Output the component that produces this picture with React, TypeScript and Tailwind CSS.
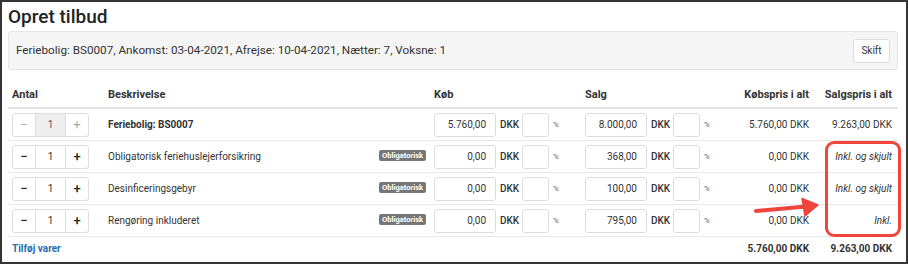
const cols = "grid grid-cols-[96px_326px_151px_151px_81px_85px]";

type Row = {
  name: string;
  bold?: boolean;
  badge?: boolean;
  disabled?: boolean;
  buy: string;
  sell: string;
  buyTotal: string;
  sellTotal: string;
  italic?: boolean;
};

const rows: Row[] = [
  { name: "Feriebolig: BS0007", bold: true, disabled: true, buy: "5.760,00", sell: "8.000,00", buyTotal: "5.760,00 DKK", sellTotal: "9.263,00 DKK" },
  { name: "Obligatorisk feriehuslejerforsikring", badge: true, buy: "0,00", sell: "368,00", buyTotal: "0,00 DKK", sellTotal: "Inkl. og skjult", italic: true },
  { name: "Desinficeringsgebyr", badge: true, buy: "0,00", sell: "100,00", buyTotal: "0,00 DKK", sellTotal: "Inkl. og skjult", italic: true },
  { name: "Rengøring inkluderet", badge: true, buy: "0,00", sell: "795,00", buyTotal: "0,00 DKK", sellTotal: "Inkl.", italic: true },
];

function Stepper({ disabled }: { disabled?: boolean }) {
  const btn = disabled ? "text-[#aaa]" : "text-[#222] font-medium";
  return (
    <div className="flex h-[24px] w-[77px] rounded-[3px] border border-[#ddd] text-[10px]">
      <span className={`flex w-[23px] items-center justify-center border-r border-[#ddd] text-[13px] ${btn}`}>−</span>
      <span className={`flex w-[30px] items-center justify-center border-r border-[#ddd] ${disabled ? "bg-[#eee] text-[#555]" : "bg-white"}`}>1</span>
      <span className={`flex flex-1 items-center justify-center text-[13px] ${btn}`}>+</span>
    </div>
  );
}

function PriceInput({ value }: { value: string }) {
  return (
    <div className="flex items-center text-[10px]">
      <div className="flex h-[24px] w-[62px] items-center justify-end rounded-[3px] border border-[#ddd] pr-[9px]">{value}</div>
      <span className="ml-[4px] w-[18px] font-medium">DKK</span>
      <div className="ml-[4px] h-[24px] w-[27px] rounded-[3px] border border-[#ddd]" />
      <span className="ml-[4px] text-[8px] text-[#666]">%</span>
    </div>
  );
}

export default function App() {
  return (
    <div className="relative h-[264px] w-[908px] overflow-hidden border-2 border-[#353535] bg-white font-['Roboto',sans-serif] text-[#333]">
      <div className="pl-[6px] pr-[8px]">
        <h1 className="pt-[2px] text-[19px] font-medium leading-[26px] text-[#222]">Opret tilbud</h1>

        <div className="mt-[1px] flex h-[39px] items-center justify-between rounded-[3px] border border-[#e6e6e6] bg-[#f5f5f5] pl-[7px] pr-[7px]">
          <span className="text-[11.7px]">Feriebolig: BS0007, Ankomst: 03-04-2021, Afrejse: 10-04-2021, Nætter: 7, Voksne: 1</span>
          <button className="flex h-[24px] w-[37px] items-center justify-center rounded-[3px] border border-[#ddd] bg-white text-[10px]">Skift</button>
        </div>

        <div className="mt-[14px] text-[10px]">
          <div className={`${cols} h-[25px] items-center border-b-2 border-[#e2e2e2] text-[11px] font-bold`}>
            <span className="pl-[4px]">Antal</span>
            <span className="pl-[4px]">Beskrivelse</span>
            <span className="pl-[4px]">Køb</span>
            <span className="pl-[4px]">Salg</span>
            <span className="pr-[4px] text-right">Købspris i alt</span>
            <span className="pr-[6px] text-right">Salgspris i alt</span>
          </div>

          {rows.map((r) => (
            <div key={r.name} className={`${cols} h-[32px] items-center border-b border-[#e6e6e6]`}>
              <div className="pl-[4px]">
                <Stepper disabled={r.disabled} />
              </div>
              <div className="flex h-full items-center justify-between pl-[4px] pr-[4px]">
                <span className={r.bold ? "font-bold" : ""}>{r.name}</span>
                {r.badge && (
                  <span className="mb-[3px] rounded-[2px] bg-[#777] px-[3px] text-[7.5px] font-bold leading-[11px] text-white">Obligatorisk</span>
                )}
              </div>
              <div className="pl-[4px]">
                <PriceInput value={r.buy} />
              </div>
              <div className="pl-[4px]">
                <PriceInput value={r.sell} />
              </div>
              <span className="pr-[4px] text-right">{r.buyTotal}</span>
              <span className={`pr-[6px] text-right ${r.italic ? "italic" : ""}`}>{r.sellTotal}</span>
            </div>
          ))}

          <div className={`${cols} h-[22px] items-center font-bold`}>
            <span className="pl-[4px] text-[10px] text-[#2a6db0]">Tilføj varer</span>
            <span />
            <span />
            <span />
            <span className="pr-[4px] text-right">5.760,00 DKK</span>
            <span className="pr-[6px] text-right">9.263,00 DKK</span>
          </div>
        </div>
      </div>

      <div className="pointer-events-none absolute left-[823px] top-[139px] h-[96px] w-[76px] rounded-[9px] border-[3px] border-[#f0453c]" />
      <svg className="pointer-events-none absolute left-0 top-0" width="908" height="264" viewBox="0 0 908 264">
        <line x1="754" y1="209" x2="804" y2="204.5" stroke="#f0453c" strokeWidth="4" strokeLinecap="round" />
        <path d="M800 196.5 L816 203 L803 214 Z" fill="#f0453c" strokeLinejoin="round" stroke="#f0453c" strokeWidth="1.5" />
      </svg>
    </div>
  );
}
